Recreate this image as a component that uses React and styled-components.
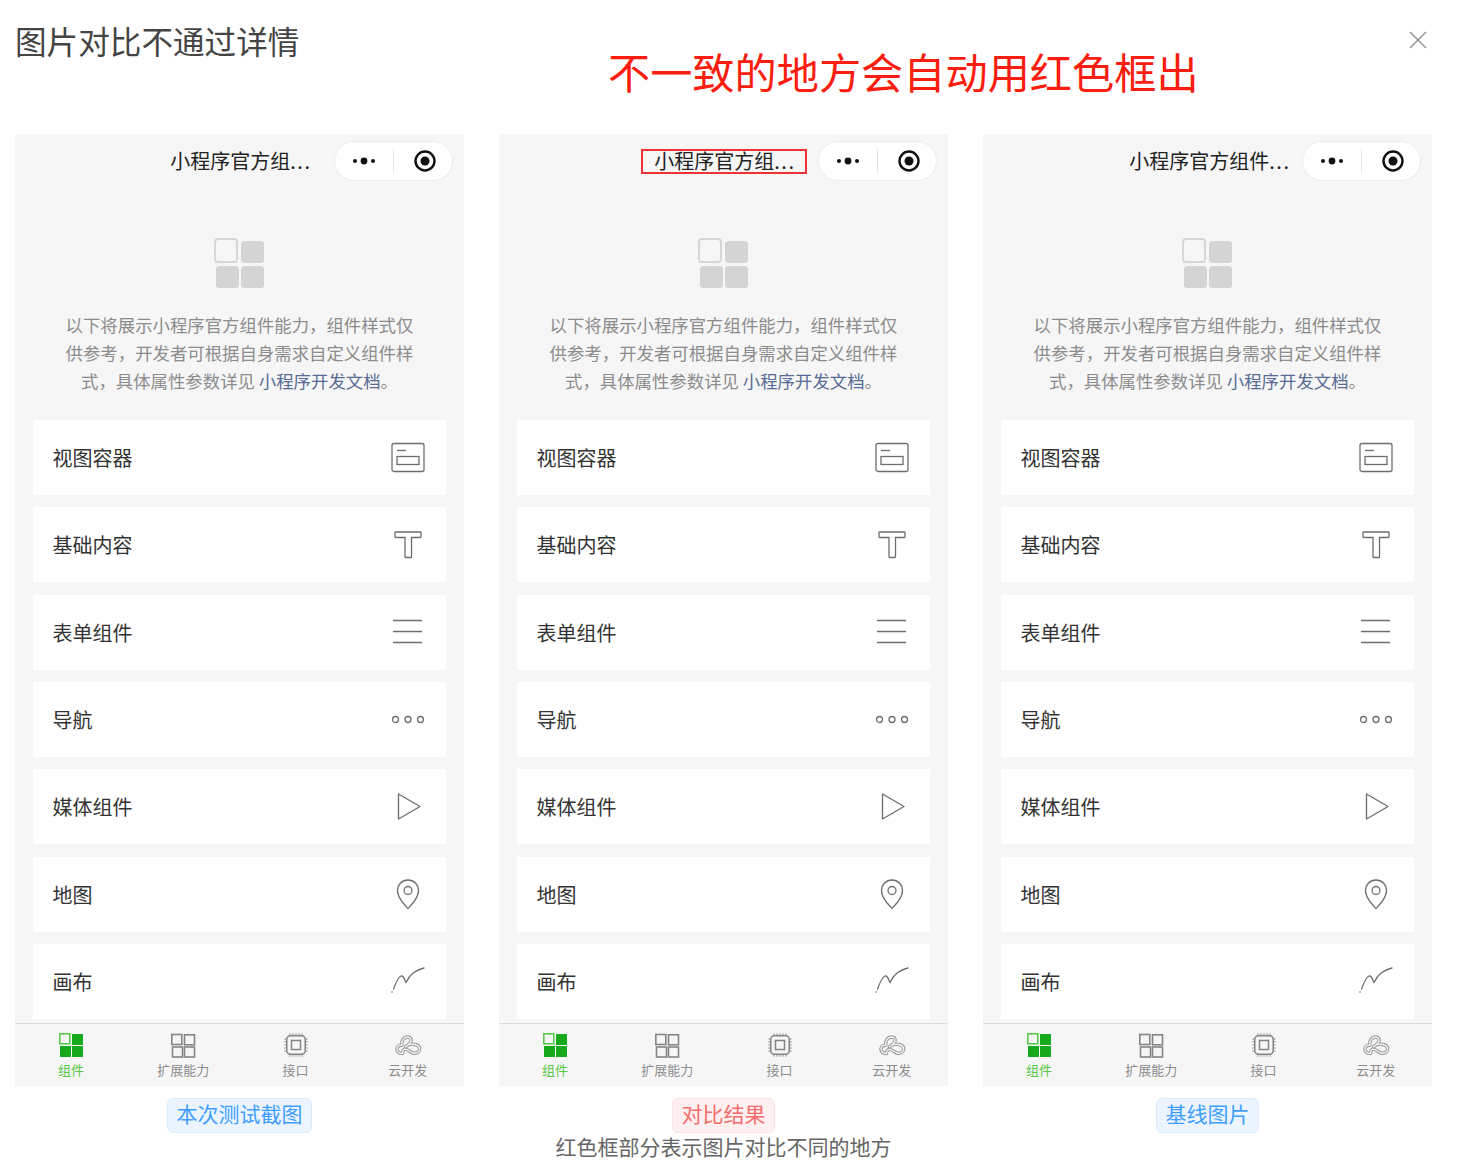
import styled, { createGlobalStyle } from 'styled-components';

const GlobalStyle = createGlobalStyle`
  html, body {
    margin:0;
    padding:0;
    background:#fff;
    font-family:"Noto Sans CJK SC", "Liberation Sans", sans-serif;
  }
`;

const Page = styled.div`
  width:1459px;
  height:1167px;
  overflow:hidden;
  padding-left:15px;
  box-sizing:border-box;
`;

const Header = styled.div`
  display:flex;
  height:134px;
  align-items:flex-start;
`;

const Title = styled.h1`
  margin:18px 0 0;
  font-size:31.6px;
  line-height:44px;
  font-weight:400;
  color:#444;
  width:284px;
  white-space:nowrap;
`;

const Notice = styled.div`
  margin:41px 0 0 309px;
  font-size:42.2px;
  line-height:60px;
  color:#fb1d0f;
  white-space:nowrap;
`;

const Close = styled.svg`
  margin:31px 0 0 210px;
  width:18px;
  height:18px;
`;

const Columns = styled.div`
  display:grid;
  grid-template-columns:repeat(3, 449px);
  column-gap:35px;
`;

const Column = styled.div`
  display:flex;
  flex-direction:column;
  align-items:center;
`;

const Phone = styled.div`
  width:449px;
  height:952px;
  background:#f6f6f6;
  display:flex;
  flex-direction:column;
`;

const NavBar = styled.div`
  height:54px;
  box-sizing:border-box;
  flex:none;
  display:flex;
  justify-content:flex-end;
  align-items:flex-start;
  padding:7px 11px 0 0;
`;

const NavTitle = styled.div`
  margin:8px ${p => p.$gap}px 0 0;
  padding:0 11px;
  height:25px;
  box-sizing:border-box;
  border:2px solid ${p => p.$marked ? '#ee3236' : 'transparent'};
  font-size:20px;
  line-height:19px;
  color:#222;
  white-space:nowrap;
`;

const Ellipsis = styled.span`
  letter-spacing:1.5px;
  margin-right:-1.5px;
`;

const Capsule = styled.div`
  width:119px;
  height:40px;
  box-sizing:border-box;
  border:1px solid #ececec;
  border-radius:20px;
  background:#fff;
  display:flex;
  align-items:center;
`;

const CapsuleDivider = styled.div`
  width:1px;
  height:24px;
  background:#e4e4e4;
`;

const MenuCell = styled.div`
  flex:none;
  width:58px;
  display:flex;
  justify-content:center;
  align-items:center;
`;

const TargetCell = styled.div`
  flex:1;
  display:flex;
  justify-content:center;
  align-items:center;
  padding-left:3px;
`;

const Hero = styled.svg`
  display:block;
  flex:none;
  width:52px;
  height:52px;
  margin:50px auto 0;
`;

const Intro = styled.p`
  flex:none;
  width:360px;
  margin:21px auto 0;
  font-size:17.4px;
  line-height:28px;
  text-align:center;
  color:#8c8c8c;
`;

const DocLink = styled.span`
  color:#576b95;
`;

const Rows = styled.div`
  flex:none;
  margin:25px 18px 0;
  display:flex;
  flex-direction:column;
  gap:12.33px;
`;

const Row = styled.div`
  height:75px;
  background:#fff;
  display:flex;
  align-items:center;
  justify-content:space-between;
  padding:0 20px 0 19.5px;
  font-size:20px;
  color:#333;
`;

const RowIcon = styled.svg`
  width:36px;
  height:36px;
  fill:none;
  stroke:#6e6e6e;
  stroke-width:1.3;
`;

const TabBar = styled.div`
  margin-top:auto;
  height:63px;
  box-sizing:border-box;
  border-top:1px solid #dcdcdc;
  display:grid;
  grid-template-columns:repeat(4, 1fr);
`;

const Tab = styled.div`
  display:flex;
  flex-direction:column;
  align-items:center;
  padding-top:7px;
  font-size:13px;
  line-height:18px;
  color:${p => p.$active ? '#5ac84a' : '#8c8c8c'};
`;

const TabIcon = styled.svg`
  width:28px;
  height:28px;
  margin-bottom:2px;
  fill:none;
`;

const Tag = styled.div`
  margin-top:12px;
  height:35px;
  box-sizing:border-box;
  padding:0 8.5px;
  border-radius:6px;
  font-size:21px;
  line-height:29px;
  white-space:nowrap;
  color:${p => p.$danger ? '#f56c6c' : '#409eff'};
  background:${p => p.$danger ? '#fef0f0' : '#ecf5ff'};
  border:1px solid ${p => p.$danger ? '#fde2e2' : '#d9ecff'};
`;

const Caption = styled.div`
  margin-top:-1px;
  font-size:21px;
  line-height:28px;
  color:#666;
  white-space:nowrap;
`;

const MenuDots = () => (
  <svg width="28" height="12" viewBox="0 0 28 12">
    <circle cx="5" cy="6" r="2" fill="#111" />
    <circle cx="14" cy="6" r="3.4" fill="#111" />
    <circle cx="23" cy="6" r="2" fill="#111" />
  </svg>
);

const Target = () => (
  <svg width="26" height="26" viewBox="0 0 26 26">
    <circle cx="13" cy="13" r="9.5" fill="none" stroke="#111" strokeWidth="2.4" />
    <circle cx="13" cy="13" r="4.5" fill="#111" />
  </svg>
);

const rowIcons = {
  view: <>
    <rect x="2" y="3.5" width="32" height="28" rx="2" />
    <path d="M7 10.5h9" />
    <rect x="7" y="16.5" width="22" height="8" />
  </>,
  text: <path d="M5.5 5h25a.5.5 0 0 1 .5.5v4.500a.5.500 0 0 1-.5.500H21.500v19.500a.5.5 0 0 1-.5.5h-5.500a.5.5 0 0 1-.5-.5V10.500H5.500a.5.5 0 0 1-.5-.5V5.500a.5.5 0 0 1 .5-.5z" />,
  form: <path d="M3 6.500h29M3 17.500h29M3 28.500h29" />,
  nav: <>
    <circle cx="5.500" cy="18.500" r="3" />
    <circle cx="18" cy="18.500" r="3" />
    <circle cx="30.500" cy="18.500" r="3" />
  </>,
  media: <path d="M8.500 5v25L30 17.500z" strokeLinejoin="round" />,
  map: <>
    <path d="M18 32.500C13 27 7.500 21 7.500 14.500a10.500 10.500 0 0 1 21 0C28.500 21 23 27 18 32.500z" strokeLinejoin="round" />
    <circle cx="18" cy="14.500" r="4" />
  </>,
  canvas: <>
    <path d="M3.500 26C5.500 20.500 8 14 11 13C14 12.200 14.500 17 16 19.500C18 15.500 20 12.500 23 10C26 8 30 5.800 34 5" strokeLinecap="round" />
    <circle cx="2" cy="29" r=".8" fill="#6e6e6e" stroke="none" />
  </>,
};

const items = [
  { name: '视图容器', icon: 'view' },
  { name: '基础内容', icon: 'text' },
  { name: '表单组件', icon: 'form' },
  { name: '导航', icon: 'nav' },
  { name: '媒体组件', icon: 'media' },
  { name: '地图', icon: 'map' },
  { name: '画布', icon: 'canvas' },
];

const GREEN = '#16a91e';
const GRAY = '#858585';
const CLOUD = 'M8.500 22.500C4.500 22.500 2.500 20 3 17.500C3.500 15 5.800 14 7.800 14.300C7.300 9.500 10 6 13.500 6C17 6 18.500 9.500 15.500 12.500C13.500 14.500 11.500 15.800 11.500 15.800C14 13.500 18 12.800 21 13.500C24.500 14.300 26 16.500 25.500 18.800C25 21.500 22 22.800 19 22C15.500 21 14 17.500 10.500 18.500C9 19 8.500 20.500 8.500 22.500z';

const tabs = [
  {
    name: '组件',
    active: true,
    icon: <>
      <rect x="2.800" y="2.800" width="10" height="10" stroke="#5ac84a" strokeWidth="1.600" />
      <rect x="15" y="3" width="11" height="11" fill={GREEN} />
      <rect x="3" y="15" width="11" height="11" fill={GREEN} />
      <rect x="15" y="15" width="11" height="11" fill={GREEN} />
    </>,
  },
  {
    name: '扩展能力',
    icon: <g stroke={GRAY} strokeWidth="1.600">
      <rect x="2.800" y="3.500" width="10" height="10" />
      <rect x="15.500" y="3.800" width="10" height="10" />
      <rect x="3.500" y="16" width="10" height="10" />
      <rect x="15.500" y="16" width="10" height="10" />
    </g>,
  },
  {
    name: '接口',
    icon: <g stroke={GRAY}>
      <rect x="4.800" y="4.800" width="18.400" height="18.400" rx="3.500" strokeWidth="1.500" />
      <rect x="9.500" y="9.500" width="9" height="9" strokeWidth="1.500" />
      <path d="M8 2.300v2M11 2.300v2M14 2.300v2M17 2.300v2M20 2.300v2M8 23.700v2M11 23.700v2M14 23.700v2M17 23.700v2M20 23.700v2M2.300 8h2M2.300 11h2M2.300 14h2M2.300 17h2M2.300 20h2M23.700 8h2M23.700 11h2M23.700 14h2M23.700 17h2M23.700 20h2" strokeWidth=".9" />
    </g>,
  },
  {
    name: '云开发',
    icon: <>
      <path d={CLOUD} stroke="#9a9a9a" strokeWidth="3.400" strokeLinejoin="round" />
      <path d={CLOUD} stroke="#f6f6f6" strokeWidth="1.300" strokeLinejoin="round" />
    </>,
  },
];

const columns = [
  { tag: '本次测试截图', title: '小程序官方组', gap: 11 },
  { tag: '对比结果', title: '小程序官方组', gap: 11, marked: true, danger: true, caption: '红色框部分表示图片对比不同的地方' },
  { tag: '基线图片', title: '小程序官方组件', gap: 0 },
];

const introText = '以下将展示小程序官方组件能力\uFF0C组件样式仅供参考\uFF0C开发者可根据自身需求自定义组件样式\uFF0C具体属性参数详见 ';

const App = () => {
  return <Page>
    <GlobalStyle />
    <Header>
      <Title>图片对比不通过详情</Title>
      <Notice>不一致的地方会自动用红色框出</Notice>
      <Close viewBox="0 0 18 18">
        <path d="M1 1l16 16M17 1L1 17" stroke="#8f8f8f" strokeWidth="1.400" />
      </Close>
    </Header>
    <Columns>
      {columns.map(col => <Column key={col.tag}>
        <Phone>
          <NavBar>
            <NavTitle $gap={col.gap} $marked={col.marked}>{col.title}<Ellipsis>...</Ellipsis></NavTitle>
            <Capsule>
              <MenuCell><MenuDots /></MenuCell>
              <CapsuleDivider />
              <TargetCell><Target /></TargetCell>
            </Capsule>
          </NavBar>
          <Hero viewBox="0 0 52 52">
            <rect x="1" y="1" width="22" height="23" rx="3" fill="none" stroke="#d6d6d6" strokeWidth="2" />
            <rect x="27" y="3" width="23" height="22" rx="3.500" fill="#d4d4d4" />
            <rect x="2" y="28" width="23" height="22" rx="3.500" fill="#d4d4d4" />
            <rect x="27" y="28" width="23" height="22" rx="3.500" fill="#d4d4d4" />
          </Hero>
          <Intro>
            {introText}<DocLink>小程序开发文档</DocLink>。
          </Intro>
          <Rows>
            {items.map(item => <Row key={item.name}>
              {item.name}
              <RowIcon viewBox="0 0 36 36">{rowIcons[item.icon]}</RowIcon>
            </Row>)}
          </Rows>
          <TabBar>
            {tabs.map(tab => <Tab key={tab.name} $active={tab.active}>
              <TabIcon viewBox="0 0 28 28">{tab.icon}</TabIcon>
              {tab.name}
            </Tab>)}
          </TabBar>
        </Phone>
        <Tag $danger={col.danger}>{col.tag}</Tag>
        {col.caption && <Caption>{col.caption}</Caption>}
      </Column>)}
    </Columns>
  </Page>
}

export default App;
